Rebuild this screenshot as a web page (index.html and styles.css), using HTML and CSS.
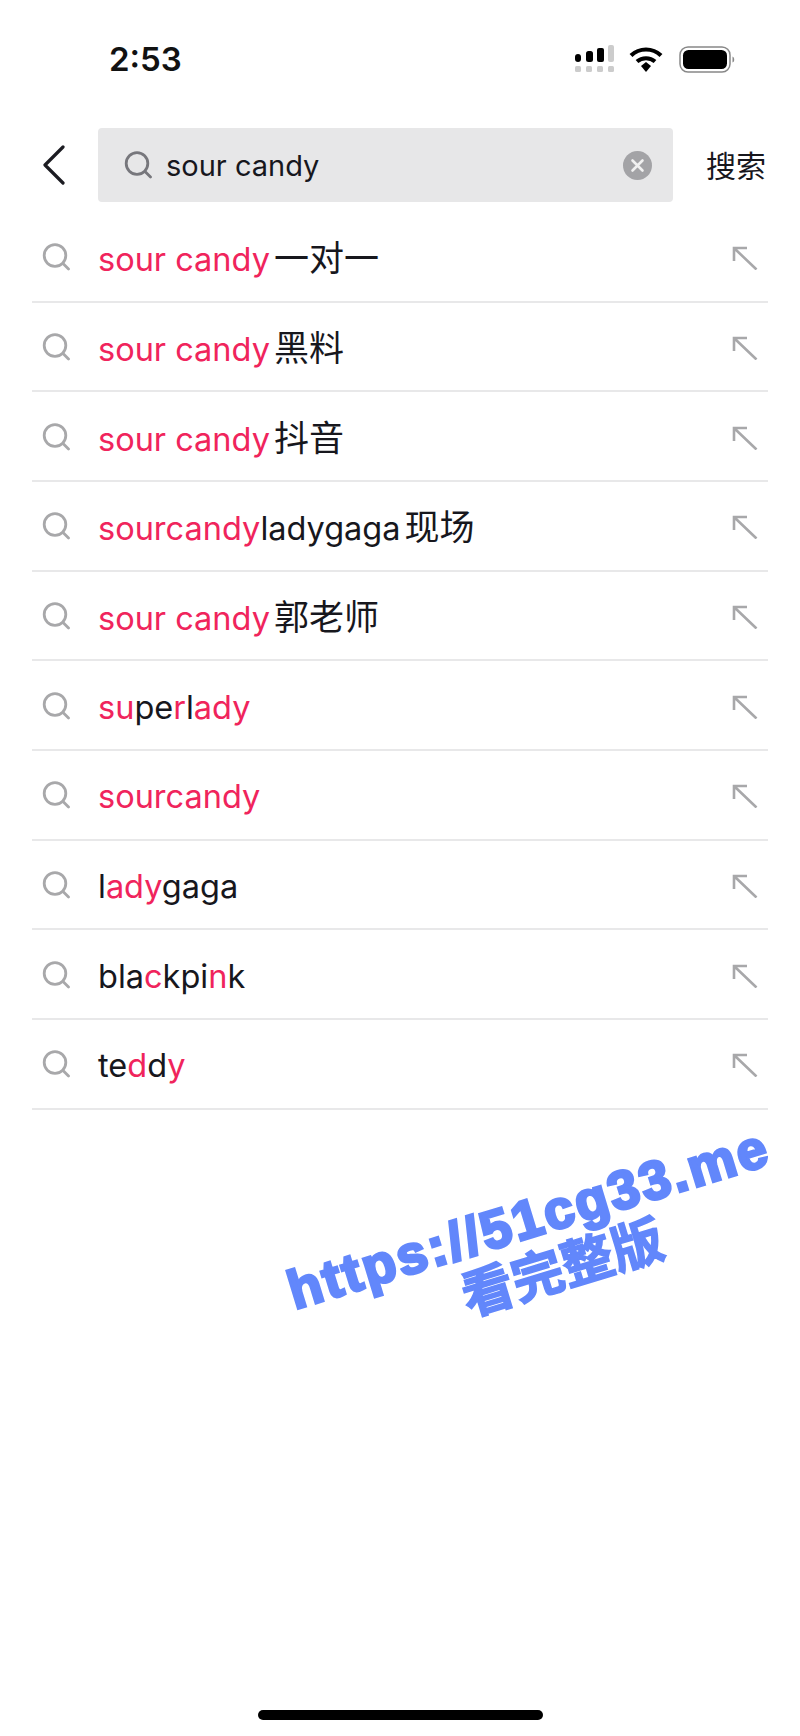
FILE: index.html
```html
<!DOCTYPE html>
<html lang="zh">
<head>
    <meta charset="UTF-8">
    <meta name="viewport" content="width=device-width, initial-scale=1.0">
    <title>搜索</title>
    <link rel="stylesheet" href="styles.css">
</head>
<body>
    <svg class="sprite" width="0" height="0">
        <symbol id="icon-search" viewBox="0 0 28 28">
            <circle cx="13" cy="12.500" r="10.800" fill="none" stroke="currentColor" stroke-width="2.800"/>
            <path d="M21 20.500l5.500 5.500" fill="none" stroke="currentColor" stroke-width="2.800" stroke-linecap="round"/>
        </symbol>
        <symbol id="icon-fill" viewBox="0 0 26 24">
            <path d="M2 15V2h13M2.500 2.500l22 21" fill="none" stroke="currentColor" stroke-width="2.600"/>
        </symbol>
    </svg>

    <div class="page">
        <div class="status-bar">
            <span class="time">2:53</span>
            <div class="status-icons">
                <svg class="signal" width="40" height="28" viewBox="0 0 40 28">
                    <rect x="0" y="9" width="6" height="8" rx="3" fill="#000"/>
                    <rect x="11" y="6" width="7" height="11" rx="2.500" fill="#000"/>
                    <rect x="22" y="3" width="7" height="14" rx="2" fill="#000"/>
                    <rect x="33" y="0" width="6" height="17" rx="2" fill="#ccc"/>
                    <rect x="0" y="21" width="6" height="6" rx="1.500" fill="#ccc"/>
                    <rect x="11" y="21" width="6" height="6" rx="1.500" fill="#ccc"/>
                    <rect x="22" y="21" width="6" height="6" rx="1.500" fill="#ccc"/>
                    <rect x="33" y="21" width="6" height="6" rx="1.500" fill="#ccc"/>
                </svg>
                <svg class="wifi" width="34" height="26" viewBox="0 0 34 26">
                    <path d="M2 9.500C10.500 1.500 23.500 1.500 32 9.500" fill="none" stroke="#000" stroke-width="4.200"/>
                    <path d="M8 15.500C13 11 21 11 26 15.500" fill="none" stroke="#000" stroke-width="4"/>
                    <path d="M12 20l5-4 5 4-5 6z" fill="#000"/>
                </svg>
                <svg class="battery" width="57" height="27" viewBox="0 0 57 27">
                    <rect x="1" y="1" width="50" height="25" rx="8" fill="none" stroke="#888" stroke-width="1.500"/>
                    <rect x="4" y="4" width="44" height="19" rx="5.500" fill="#000"/>
                    <path d="M53.500 10.500c2 .5 2.500 5.500 0 6z" fill="#888"/>
                </svg>
            </div>
        </div>

        <div class="search-bar">
            <svg class="back" width="23" height="40" viewBox="0 0 23 40">
                <path d="M21 2L3 20l18 18" fill="none" stroke="#1c1c22" stroke-width="3.200" stroke-linecap="round" stroke-linejoin="round"/>
            </svg>
            <div class="search-box">
                <svg class="box-search"><use href="#icon-search"/></svg>
                <span class="query">sour candy</span>
                <svg class="clear" width="29" height="29" viewBox="0 0 29 29">
                    <circle cx="14.500" cy="14.500" r="14.500" fill="#a3a3a6"/>
                    <path d="M9.500 9.500l10 10M19.500 9.500l-10 10" stroke="#f0f0f0" stroke-width="2.600" stroke-linecap="round"/>
                </svg>
            </div>
            <span class="search-btn">搜索</span>
        </div>

        <ul class="suggestions">
            <li class="row">
                <svg class="row-search"><use href="#icon-search"/></svg>
                <span class="row-text"><em>sour candy</em><span class="cjk">一对一</span></span>
                <svg class="row-fill"><use href="#icon-fill"/></svg>
            </li>
            <li class="row">
                <svg class="row-search"><use href="#icon-search"/></svg>
                <span class="row-text"><em>sour candy</em><span class="cjk">黑料</span></span>
                <svg class="row-fill"><use href="#icon-fill"/></svg>
            </li>
            <li class="row">
                <svg class="row-search"><use href="#icon-search"/></svg>
                <span class="row-text"><em>sour candy</em><span class="cjk">抖音</span></span>
                <svg class="row-fill"><use href="#icon-fill"/></svg>
            </li>
            <li class="row">
                <svg class="row-search"><use href="#icon-search"/></svg>
                <span class="row-text"><em>sourcandy</em>ladygaga<span class="cjk">现场</span></span>
                <svg class="row-fill"><use href="#icon-fill"/></svg>
            </li>
            <li class="row">
                <svg class="row-search"><use href="#icon-search"/></svg>
                <span class="row-text"><em>sour candy</em><span class="cjk">郭老师</span></span>
                <svg class="row-fill"><use href="#icon-fill"/></svg>
            </li>
            <li class="row">
                <svg class="row-search"><use href="#icon-search"/></svg>
                <span class="row-text"><em>su</em>pe<em>r</em>l<em>ady</em></span>
                <svg class="row-fill"><use href="#icon-fill"/></svg>
            </li>
            <li class="row">
                <svg class="row-search"><use href="#icon-search"/></svg>
                <span class="row-text"><em>sourcandy</em></span>
                <svg class="row-fill"><use href="#icon-fill"/></svg>
            </li>
            <li class="row">
                <svg class="row-search"><use href="#icon-search"/></svg>
                <span class="row-text">l<em>ady</em>gaga</span>
                <svg class="row-fill"><use href="#icon-fill"/></svg>
            </li>
            <li class="row">
                <svg class="row-search"><use href="#icon-search"/></svg>
                <span class="row-text">bla<em>c</em>kpi<em>n</em>k</span>
                <svg class="row-fill"><use href="#icon-fill"/></svg>
            </li>
            <li class="row">
                <svg class="row-search"><use href="#icon-search"/></svg>
                <span class="row-text">te<em>d</em>d<em>y</em></span>
                <svg class="row-fill"><use href="#icon-fill"/></svg>
            </li>
        </ul>

        <div class="watermark">
            <div class="wm-url">https://51cg33.me</div>
            <div class="wm-cta">看完整版</div>
        </div>
        <div class="home-bar"></div>
    </div>
</body>
</html>
```

FILE: styles.css
```css
* {
    box-sizing: border-box;
}
body {
    margin: 0;
    background: #fff;
    color: #17171d;
    font-family: Inter, "Noto Sans CJK SC", sans-serif;
}
.sprite {
    position: absolute;
}
.page {
    position: relative;
    display: flex;
    flex-direction: column;
    height: 1736px;
    overflow: hidden;
}
.status-bar {
    display: flex;
    justify-content: space-between;
    align-items: center;
    height: 118px;
    margin-bottom: 10px;
    padding: 0 64px 0 109px;
}
.time {
    font-size: 33px;
    font-weight: 600;
    color: #111;
}
.status-icons {
    display: flex;
    align-items: center;
    gap: 14px;
}
.battery {
    margin-left: 2px;
}
.search-bar {
    display: flex;
    align-items: center;
    height: 74px;
    padding-left: 42px;
}
.back {
    flex: none;
}
.search-box {
    display: flex;
    align-items: center;
    width: 575px;
    height: 74px;
    margin-left: 33px;
    padding: 0 21px 0 26px;
    background: #e7e7e8;
    border-radius: 4px;
}
.box-search {
    width: 28px;
    height: 28px;
    color: #77777c;
}
.query {
    flex: 1;
    margin-left: 14px;
    font-size: 29px;
}
.search-btn {
    margin: 0 0 3px 33px;
    font-size: 30px;
}
.suggestions {
    list-style: none;
    margin: 11px 32px 0;
    padding: 0;
}
.row {
    display: flex;
    align-items: center;
    height: 89.67px;
    border-bottom: 2px solid #e8e8e9;
}
.row-search {
    width: 28px;
    height: 28px;
    margin: 1px 0 0 10px;
    color: #a8a8aa;
}
.row-text {
    flex: 1;
    margin: 5px 0 0 28px;
    font-size: 32.5px;
    line-height: 40px;
    white-space: pre-wrap;
}
.row-text em {
    font-style: normal;
    color: #f0245c;
}
.cjk {
    margin-left: 4px;
    font-size: 35px;
}
.row-fill {
    width: 26px;
    height: 24px;
    margin: 3px 10px 0 0;
    color: #a8a8aa;
}
.watermark {
    position: absolute;
    left: 272px;
    top: 1188px;
    width: 530px;
    font-family: "Liberation Sans", "Noto Sans CJK SC", sans-serif;
    font-weight: 700;
    text-align: center;
    color: #6287fb;
    transform: rotate(-17deg);
}
.wm-url {
    font-size: 54px;
    line-height: 58px;
    letter-spacing: 2.600px;
    -webkit-text-stroke: 3px #6287fb;
}
.wm-cta {
    margin-left: 36px;
    font-size: 52px;
    line-height: 58px;
    -webkit-text-stroke: 1.500px #6287fb;
}
.home-bar {
    width: 285px;
    height: 10px;
    margin: auto auto 16px;
    background: #000;
    border-radius: 5px;
}
```
